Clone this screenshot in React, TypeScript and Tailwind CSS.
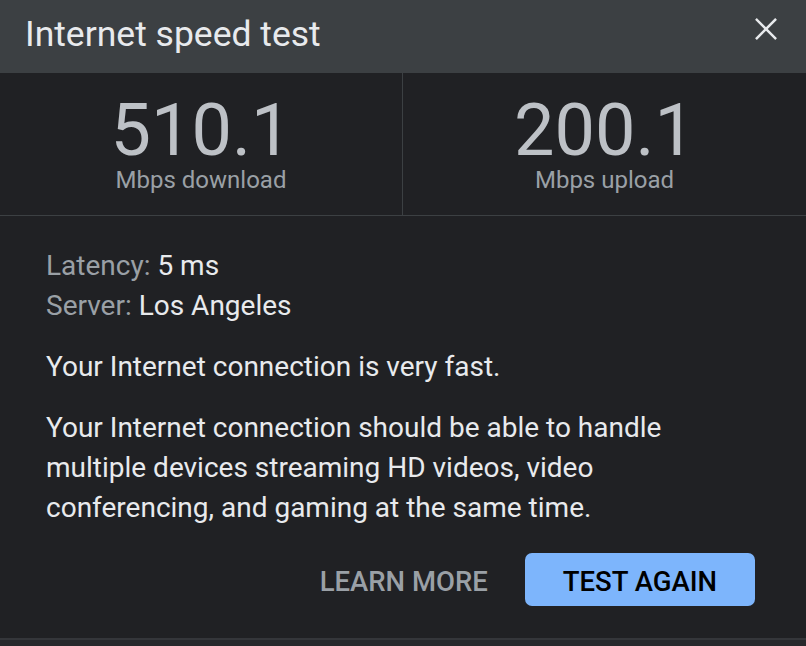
import React from "react";

function CloseIcon() {
  return (
    <svg width="22" height="22" viewBox="0 0 24 24" fill="none" aria-hidden="true">
      <path d="M2 2L22 22M22 2L2 22" stroke="#e8eaed" strokeWidth="2.7" strokeLinecap="square" />
    </svg>
  );
}

function Stat({ value, label, divider }: { value: string; label: string; divider?: boolean }) {
  return (
    <div
      className={
        "flex flex-col items-center justify-center " + (divider ? "border-r border-[#3c4043]" : "")
      }
    >
      <div className="text-[72px] leading-[72px] text-[#bdc1c6]">{value}</div>
      <div className="text-[24px] leading-[26px] text-[#9aa0a6]">{label}</div>
    </div>
  );
}

export default function App() {
  return (
    <div className="w-[806px] h-[646px] bg-[#202124] font-['Roboto',sans-serif] overflow-hidden flex flex-col">
      <header className="h-[73px] shrink-0 bg-[#3c4043] flex items-center justify-between pl-[25px] pr-[29px]">
        <h1 className="text-[35.5px] leading-none text-[#e8eaed] pb-[3px]">Internet speed test</h1>
        <button className="self-start mt-[18px] flex items-center justify-center" aria-label="Close">
          <CloseIcon />
        </button>
      </header>

      <section className="grid grid-cols-2 h-[143px] shrink-0 border-b border-[#3c4043]">
        <Stat value="510.1" label="Mbps download" divider />
        <Stat value="200.1" label="Mbps upload" />
      </section>

      <main className="flex-1 flex flex-col px-[46px] pt-[30px] text-[28px] leading-[40px] text-[#e8eaed]">
        <div>
          <p>
            <span className="text-[#9aa0a6]">Latency:</span> 5 ms
          </p>
          <p>
            <span className="text-[#9aa0a6]">Server:</span> Los Angeles
          </p>
        </div>
        <p className="mt-[21px]">Your Internet connection is very fast.</p>
        <p className="mt-[21px]">
          Your Internet connection should be able to handle multiple devices streaming HD videos, video
          conferencing, and gaming at the same time.
        </p>
        <div className="mt-[25px] flex items-center justify-end pr-[5px]">
          <button className="mr-[37px] mt-[5px] text-[27.5px] font-medium leading-none text-[#9aa0a6]">
            LEARN MORE
          </button>
          <button className="h-[53px] px-[38px] pt-[4px] flex items-center rounded-[7px] bg-[#7db5fc] text-[27.5px] font-medium leading-none text-[#000000]">
            TEST AGAIN
          </button>
        </div>
      </main>

      <div className="h-[8px] shrink-0 border-t-2 border-[#34363a] bg-[#27282b]" />
    </div>
  );
}
